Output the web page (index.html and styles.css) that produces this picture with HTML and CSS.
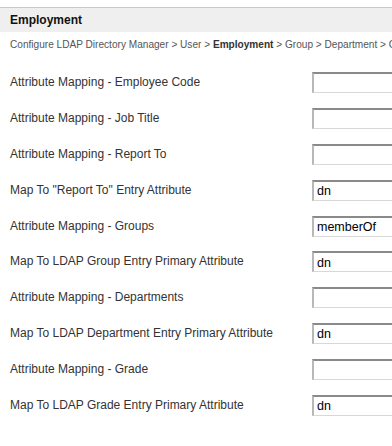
FILE: index.html
```html
<!DOCTYPE html>
<html>
<head>
<meta charset="utf-8">
<link rel="stylesheet" href="styles.css">
</head>
<body>
<div class="page">
  <div class="header">Employment</div>
  <div class="crumbs">Configure LDAP Directory Manager &gt; User &gt; <b>Employment</b> &gt; Group &gt; Department &gt; Grade</div>
  <div class="form">
    <div class="row"><span class="label">Attribute Mapping - Employee Code</span><input class="field" type="text" value=""></div>
    <div class="row"><span class="label">Attribute Mapping - Job Title</span><input class="field" type="text" value=""></div>
    <div class="row"><span class="label">Attribute Mapping - Report To</span><input class="field" type="text" value=""></div>
    <div class="row"><span class="label">Map To "Report To" Entry Attribute</span><input class="field" type="text" value="dn"></div>
    <div class="row"><span class="label">Attribute Mapping - Groups</span><input class="field" type="text" value="memberOf"></div>
    <div class="row"><span class="label">Map To LDAP Group Entry Primary Attribute</span><input class="field" type="text" value="dn"></div>
    <div class="row"><span class="label">Attribute Mapping - Departments</span><input class="field" type="text" value=""></div>
    <div class="row"><span class="label">Map To LDAP Department Entry Primary Attribute</span><input class="field" type="text" value="dn"></div>
    <div class="row"><span class="label">Attribute Mapping - Grade</span><input class="field" type="text" value=""></div>
    <div class="row"><span class="label">Map To LDAP Grade Entry Primary Attribute</span><input class="field" type="text" value="dn"></div>
  </div>
</div>
</body>
</html>
```
FILE: styles.css
```css
html, body {
  margin: 0;
  padding: 0;
  background: #fff;
  overflow: hidden;
}
body {
  font-family: "Liberation Sans", Arial, sans-serif;
  color: #333;
}
.page {
  padding-top: 7px;
  width: 392px;
  overflow: hidden;
}
.header {
  border-top: 1px solid #c8c8c8;
  background: #efefef;
  height: 24px;
  line-height: 24px;
  padding-left: 10px;
  font-size: 12px;
  font-weight: bold;
  color: #111;
}
.crumbs {
  padding: 6px 0 0 10px;
  height: 18px;
  line-height: 13px;
  font-size: 10.1px;
  color: #555;
  white-space: nowrap;
}
.crumbs b {
  color: #333;
}
.form {
  display: flex;
  flex-direction: column;
  padding-top: 9px;
}
.row {
  display: grid;
  grid-template-columns: 302px 160px;
  align-items: center;
  height: 35.8px;
  padding-left: 10px;
}
.label {
  padding-bottom: 1px;
  font-size: 12px;
  color: #333;
  white-space: nowrap;
}
.field {
  box-sizing: border-box;
  width: 160px;
  height: 21px;
  margin: 0;
  padding: 1px 3px 0;
  font-family: "Liberation Sans", Arial, sans-serif;
  font-size: 12.5px;
  color: #000;
  background: #fff;
  border-style: solid;
  border-width: 2px 1px 1px 2px;
  border-color: #8a8a8a #d8d8d8 #d8d8d8 #b8b8b8;
  outline: none;
}
```
